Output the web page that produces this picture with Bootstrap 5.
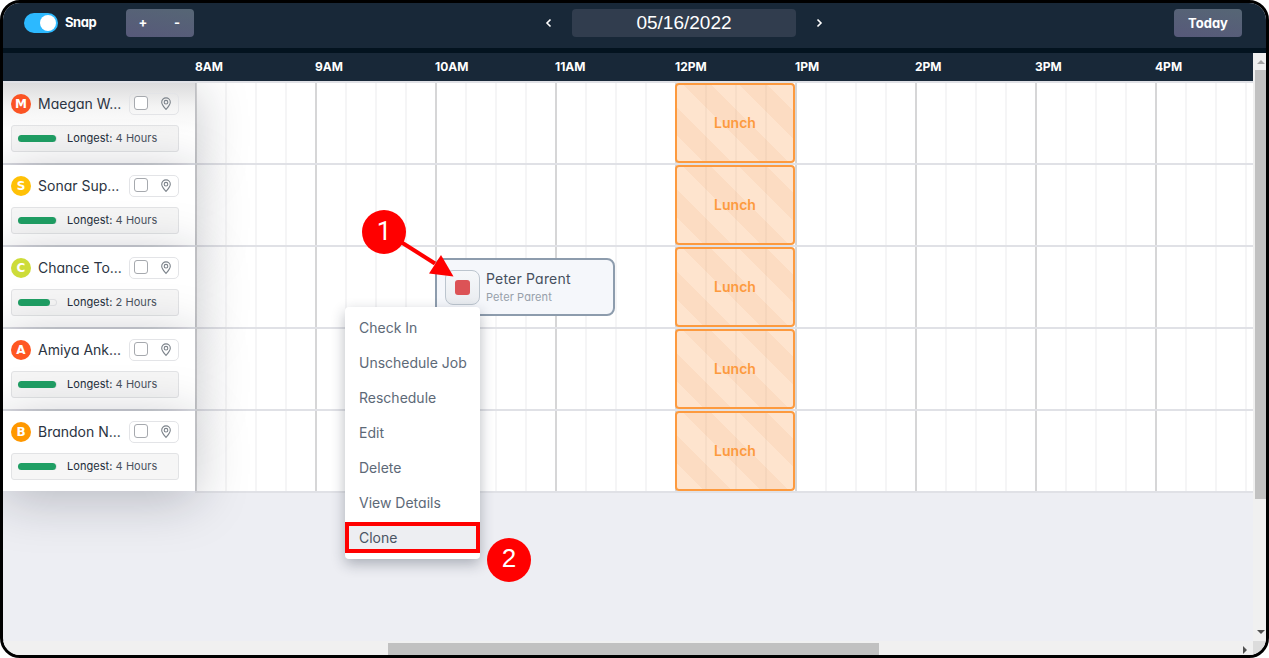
<!DOCTYPE html>
<html lang="en">
<head>
  <meta charset="UTF-8" />
  <meta name="viewport" content="width=device-width, initial-scale=1" />
  <title>Dispatch Schedule</title>
  <!-- Bootstrap CSS -->
  <link href="https://cdn.jsdelivr.net/npm/bootstrap@5.3.0/dist/css/bootstrap.min.css" rel="stylesheet" />
  <style>
    body {
      font-family: Inter, "Liberation Sans", sans-serif;
      font-feature-settings: "cv11";
      background: #fff;
      overflow: hidden;
    }
    .app-frame {
      width: 1269px;
      height: 658px;
      border: 3px solid #000;
      border-radius: 20px;
      background: #edeef3;
    }

    /* Top bar */
    .topbar {
      height: 50px;
      padding: 0 24px 5px 21px;
      background: #182838;
      border-bottom: 5px solid #03131f;
      color: #fff;
      font-size: 13px;
      font-weight: 700;
    }
    .left-zone { width: 502px; }
    .right-zone { width: 400px; }
    .snap-switch {
      width: 34px;
      height: 20px;
      padding: 2px;
      background: #2cb9ff;
    }
    .snap-knob { width: 16px; height: 16px; }
    .snap-label { width: 38px; margin-left: 7px; letter-spacing: -.4px; }
    .tool-btn {
      height: 28px;
      border-radius: 4px;
      background: linear-gradient(10deg, #57597a, #566675);
      font-size: 13px;
      font-weight: 700;
      color: #fff;
    }
    .zoom-btns { width: 68px; margin-left: 23px; }
    .today-btn { width: 68px; padding-top: 1px; }
    .date-box {
      width: 224px;
      height: 28px;
      margin: 0 18px;
      border-radius: 4px;
      background: #313d4e;
      font: 19px "Liberation Sans", Arial, sans-serif;
    }

    /* Schedule */
    .hours-bar {
      height: 30px;
      background: #182838;
      border-bottom: 2px solid #e0e1e6;
      padding-left: 192px;
      color: #fff;
      font-size: 12px;
      font-weight: 700;
    }
    .hours-bar span { flex: 0 0 120px; }
    .sched-pane { width: 1250px; height: 588px; }
    .tech-row { height: 82px; }
    .tech-cell {
      position: relative;
      z-index: 1;
      width: 193px;
      height: 80px;
      padding: 10px 16px 0 8px;
      background: #fff;
      border-right: 1px solid #bfc0c4;
      box-shadow: 0 8px 52px rgba(20, 25, 40, .25);
    }
    .tech-row:first-child .tech-cell {
      background: linear-gradient(#dcdcdd, #f4f4f4 24px, #fff 50px);
    }
    .avatar {
      width: 20px;
      height: 20px;
      font: bold 12px "DejaVu Sans", sans-serif;
      color: #fff;
    }
    .tech-name {
      width: 91px;
      padding-left: 7px;
      font-size: 14px;
      line-height: 20px;
      color: #2b3442;
      white-space: nowrap;
    }
    .pick-box {
      width: 50px;
      height: 22px;
      padding: 0 6px 0 4px;
      border: 1px solid #e3e4e7;
      border-radius: 5px;
    }
    .pick-check {
      width: 14px;
      height: 14px;
      margin-top: -2px;
      border: 1px solid #a6a9ae;
      border-radius: 3px;
      background: #fff;
    }
    .longest-box {
      height: 27px;
      margin-top: 10px;
      padding: 0 6px;
      border: 1px solid #e2e3e5;
      border-radius: 3px;
      background: rgba(0, 0, 0, .035);
      font-size: 11px;
      letter-spacing: .05px;
      color: #4a525e;
    }
    .longest-box b { font-weight: 400; color: #222c3a; }
    .load-track {
      width: 39px;
      height: 7px;
      margin-right: 10px;
      border-radius: 4px;
      box-shadow: inset 0 0 0 1px #e2e3e5;
    }
    .load-fill {
      height: 7px;
      border-radius: 4px;
      background: #1f9f64;
    }
    .time-lane {
      display: grid;
      grid-template-columns: repeat(36, 30px);
      width: 1058px;
      margin-left: -1px;
      height: 82px;
      border-bottom: 2px solid #e0e1e6;
      background: repeating-linear-gradient(90deg,
        #d6d6d7 0 2px, #fff 2px 30px, #f5f5f6 30px 32px, #fff 32px 60px,
        #f5f5f6 60px 62px, #fff 62px 90px, #f5f5f6 90px 92px, #fff 92px 120px);
      overflow: hidden;
    }
    .lunch-block {
      grid-column: 17 / span 4;
      grid-row: 1;
      height: 80px;
      padding-bottom: 2px;
      border: 2px solid #fd9a3e;
      border-radius: 4px;
      background:
        repeating-linear-gradient(90deg, transparent 0 28px, rgba(120, 90, 70, .05) 28px 30px),
        repeating-linear-gradient(45deg, #fee4ce 0 18px, #fcdcc2 18px 38px, #fee4ce 38px 40px);
      color: #fd9a3e;
      font-size: 14px;
      font-weight: 600;
    }
    .job-card {
      grid-column: 9 / span 6;
      grid-row: 1;
      height: 58px;
      margin-top: 11px;
      padding: 0 8px;
      border: 2px solid #8d9cad;
      border-radius: 8px;
      background: #f5f7fb;
      line-height: 18px;
    }
    .job-btn {
      width: 35px;
      height: 35px;
      margin-right: 6px;
      border: 1px solid #bcc5ce;
      border-radius: 8px;
      background: linear-gradient(#f6f8fa, #e9ecf0);
    }
    .job-stop {
      width: 15px;
      height: 15px;
      border-radius: 3px;
      background: #dc5356;
    }
    .job-text { padding-top: 2px; }
    .job-title { font-size: 14px; letter-spacing: .2px; color: #46505e; }
    .job-sub { font-size: 11px; letter-spacing: .1px; color: #97a0aa; }

    /* Scrollbars */
    .vscroll { width: 13px; height: 588px; padding-left: 2px; background: #f0f0f0; }
    .vthumb { height: 429px; background: #c1c1c1; }
    .hscroll { height: 14px; padding-top: 2px; background: #f0f0f0; }
    .hthumb { width: 491px; height: 12px; margin-left: 385px; background: #c1c1c1; }
    .scroll-corner { width: 13px; height: 14px; background: #dcdcdc; }

    /* Context menu and callouts float over the schedule */
    .job-menu {
      position: absolute;
      z-index: 3;
      left: 345px;
      top: 307px;
      width: 135px;
      height: 252px;
      padding-top: 3px;
      border-radius: 4px;
      background: #fff;
      box-shadow: 0 5px 14px rgba(30, 40, 60, .32);
      font-size: 14px;
      color: #5d6977;
    }
    .job-menu div { height: 35px; padding-left: 14px; }
    .job-menu .menu-hot {
      height: 31px;
      margin-top: 2px;
      padding-left: 10px;
      border: 4px solid #f00;
      background: #edeef2;
      color: #4a5463;
    }
    .callout {
      position: absolute;
      z-index: 4;
      width: 44px;
      height: 44px;
      background: #f00;
      color: #fff;
      font: 26px "Liberation Sans", Arial, sans-serif;
      padding-bottom: 3px;
    }
    .callout-1 { left: 362px; top: 210px; font-family: Roboto, sans-serif; }
    .callout-2 { left: 487px; top: 538px; }
    .callout-arrow { position: absolute; z-index: 4; left: 395px; top: 235px; }
  </style>
</head>
<body>
  <div class="app-frame position-relative overflow-hidden">
    <!-- Top bar -->
    <div class="topbar d-flex align-items-center justify-content-between">
      <div class="left-zone d-flex align-items-center">
        <div class="snap-switch rounded-pill d-flex justify-content-end"><div class="snap-knob rounded-circle bg-white"></div></div>
        <span class="snap-label">Snap</span>
        <div class="tool-btn zoom-btns d-flex align-items-center text-center"><span class="w-50">+</span><span class="w-50">-</span></div>
      </div>
      <div class="d-flex align-items-center">
        <svg width="10" height="12" viewBox="0 0 10 12" fill="none" stroke="#fff" stroke-width="1.6"><path d="M6.5 2.5 3 6l3.5 3.5" /></svg>
        <div class="date-box d-flex align-items-center justify-content-center">05/16/2022</div>
        <svg width="10" height="12" viewBox="0 0 10 12" fill="none" stroke="#fff" stroke-width="1.6"><path d="M3.5 2.5 7 6l-3.5 3.5" /></svg>
      </div>
      <div class="right-zone d-flex justify-content-end">
        <div class="tool-btn today-btn d-flex align-items-center justify-content-center">Today</div>
      </div>
    </div>

    <div class="d-flex">
      <div class="sched-pane overflow-hidden">
        <div class="hours-bar d-flex align-items-center overflow-hidden">
          <span>8AM</span><span>9AM</span><span>10AM</span><span>11AM</span><span>12PM</span><span>1PM</span><span>2PM</span><span>3PM</span><span>4PM</span>
        </div>
        <div id="techRows" class="overflow-hidden h-100"></div>
      </div>
      <div class="vscroll">
        <svg class="d-block" width="11" height="17"><path d="M2 11h8L6 7z" fill="#a3a3a3" /></svg>
        <div class="vthumb"></div>
        <svg class="d-block" width="11" height="142"><path d="M2 131h8l-4 4z" fill="#505050" /></svg>
      </div>
    </div>
    <div class="d-flex">
      <div class="hscroll d-flex justify-content-between flex-grow-1">
        <div class="hthumb"></div>
        <svg width="12" height="12"><path d="M2 3v8l4-4z" fill="#505050" /></svg>
      </div>
      <div class="scroll-corner"></div>
    </div>
  </div>

  <!-- Context menu -->
  <div class="job-menu">
    <div class="d-flex align-items-center">Check In</div>
    <div class="d-flex align-items-center">Unschedule Job</div>
    <div class="d-flex align-items-center">Reschedule</div>
    <div class="d-flex align-items-center">Edit</div>
    <div class="d-flex align-items-center">Delete</div>
    <div class="d-flex align-items-center">View Details</div>
    <div class="menu-hot d-flex align-items-center">Clone</div>
  </div>

  <!-- Callouts -->
  <svg class="callout-arrow" width="62" height="45" fill="#f00">
    <path d="M6 7 40 28.5" stroke="#f00" stroke-width="4" />
    <path d="M58.5 41.5 46 20 34 38.5z" />
  </svg>
  <div class="callout callout-1 rounded-circle d-flex align-items-center justify-content-center">1</div>
  <div class="callout callout-2 rounded-circle d-flex align-items-center justify-content-center">2</div>

  <!-- Bootstrap Bundle with Popper -->
  <script src="https://cdn.jsdelivr.net/npm/bootstrap@5.3.0/dist/js/bootstrap.bundle.min.js"></script>
  <script>
    const techs = [
      { name: 'Maegan W...', color: '#fb5424', hours: 4, load: 38 },
      { name: 'Sonar Sup...', color: '#ffc107', hours: 4, load: 38 },
      { name: 'Chance To...', color: '#cddc39', hours: 2, load: 32, job: 'Peter Parent' },
      { name: 'Amiya Ank...', color: '#ff5722', hours: 4, load: 38 },
      { name: 'Brandon N...', color: '#ff9800', hours: 4, load: 38 }
    ];

    const jobCard = (job) => `
      <div class="job-card d-flex align-items-center">
        <div class="job-btn d-flex align-items-center justify-content-center"><div class="job-stop"></div></div>
        <div class="job-text"><div class="job-title">${job}</div><div class="job-sub">${job}</div></div>
      </div>`;

    document.getElementById('techRows').innerHTML = techs.map((t) => `
      <div class="tech-row d-flex">
        <div class="tech-cell flex-shrink-0">
          <div class="d-flex align-items-center">
            <div class="avatar rounded-circle d-flex align-items-center justify-content-center" style="background: ${t.color}">${t.name[0]}</div>
            <div class="tech-name">${t.name}</div>
            <div class="pick-box d-flex align-items-center justify-content-between ms-auto">
              <div class="pick-check"></div>
              <svg width="12" height="14" viewBox="0 0 12 14" fill="none" stroke="#7c838b" stroke-width="1.1"><path d="M6 12.5C3.5 9.5 1.7 7.5 1.7 5.2a4.3 4.3 0 0 1 8.6 0c0 2.3-1.8 4.3-4.3 7.3z" /><circle cx="6" cy="5.2" r="1.8" /></svg>
            </div>
          </div>
          <div class="longest-box d-flex align-items-center">
            <div class="load-track"><div class="load-fill" style="width: ${t.load}px"></div></div>
            <span><b>Longest:</b> ${t.hours} Hours</span>
          </div>
        </div>
        <div class="time-lane">
          ${t.job ? jobCard(t.job) : ''}
          <div class="lunch-block d-flex align-items-center justify-content-center">Lunch</div>
        </div>
      </div>`).join('');
  </script>
</body>
</html>
